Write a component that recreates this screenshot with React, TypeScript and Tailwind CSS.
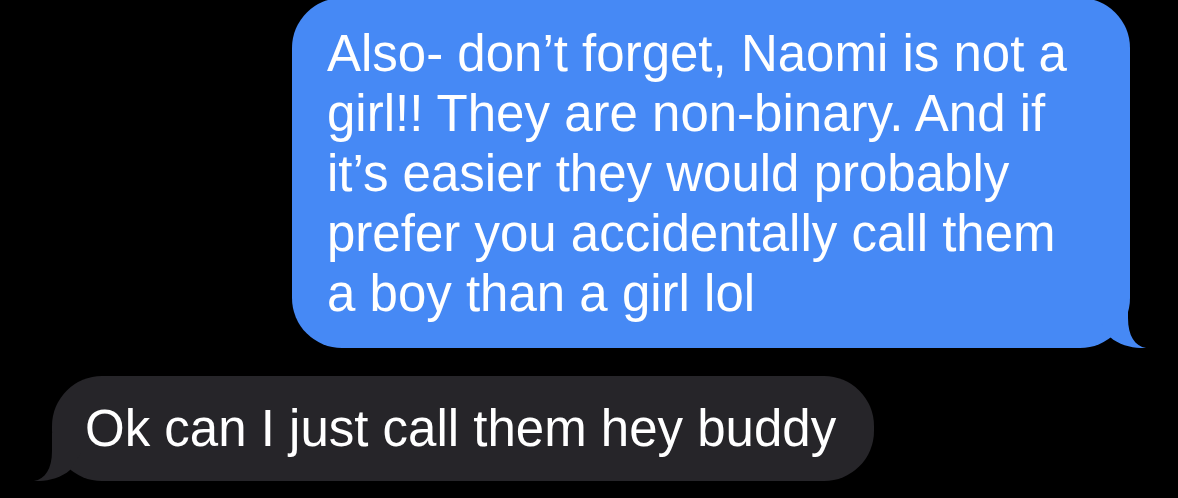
import React from "react";

function Tail({ color, flip }: { color: string; flip?: boolean }) {
  return (
    <svg
      width="48"
      height="48"
      viewBox="0 0 48 48"
      className={flip ? "absolute bottom-0 left-[-19px] -scale-x-100" : "absolute bottom-0 right-[-17px]"}
    >
      <path
        d="M0 0 L29 0 L29 18 C29 36 36 46 47 48 C36 48.5 21 46 11 37 L0 20 Z"
        fill={color}
      />
    </svg>
  );
}

export default function App() {
  const font = { fontFamily: '"Liberation Sans", Arial, sans-serif' };
  return (
    <div className="w-[1178px] h-[498px] bg-black overflow-hidden flex flex-col" style={font}>
      <div className="flex justify-end pr-[48px] mt-[-2px]">
        <div className="relative w-[838px] h-[350px] bg-[#4689f5] rounded-[50px] pl-[35px] pt-[26px] text-white text-[51px] leading-[60px]">
          <div className="relative z-10">
            <div className="whitespace-nowrap">Also- don’t forget, Naomi is not a</div>
            <div className="whitespace-nowrap">girl!! They are non-binary. And if</div>
            <div className="whitespace-nowrap">it’s easier they would probably</div>
            <div className="whitespace-nowrap">prefer you accidentally call them</div>
            <div className="whitespace-nowrap">a boy than a girl lol</div>
          </div>
          <Tail color="#4689f5" />
        </div>
      </div>
      <div className="flex pl-[52px] mt-[28px]">
        <div className="relative w-[822px] h-[105px] bg-[#262529] rounded-[50px] pl-[33px] pt-[23px] text-white text-[51px] leading-[60px]">
          <div className="relative z-10 whitespace-nowrap">Ok can I just call them hey buddy</div>
          <Tail color="#262529" flip />
        </div>
      </div>
    </div>
  );
}
